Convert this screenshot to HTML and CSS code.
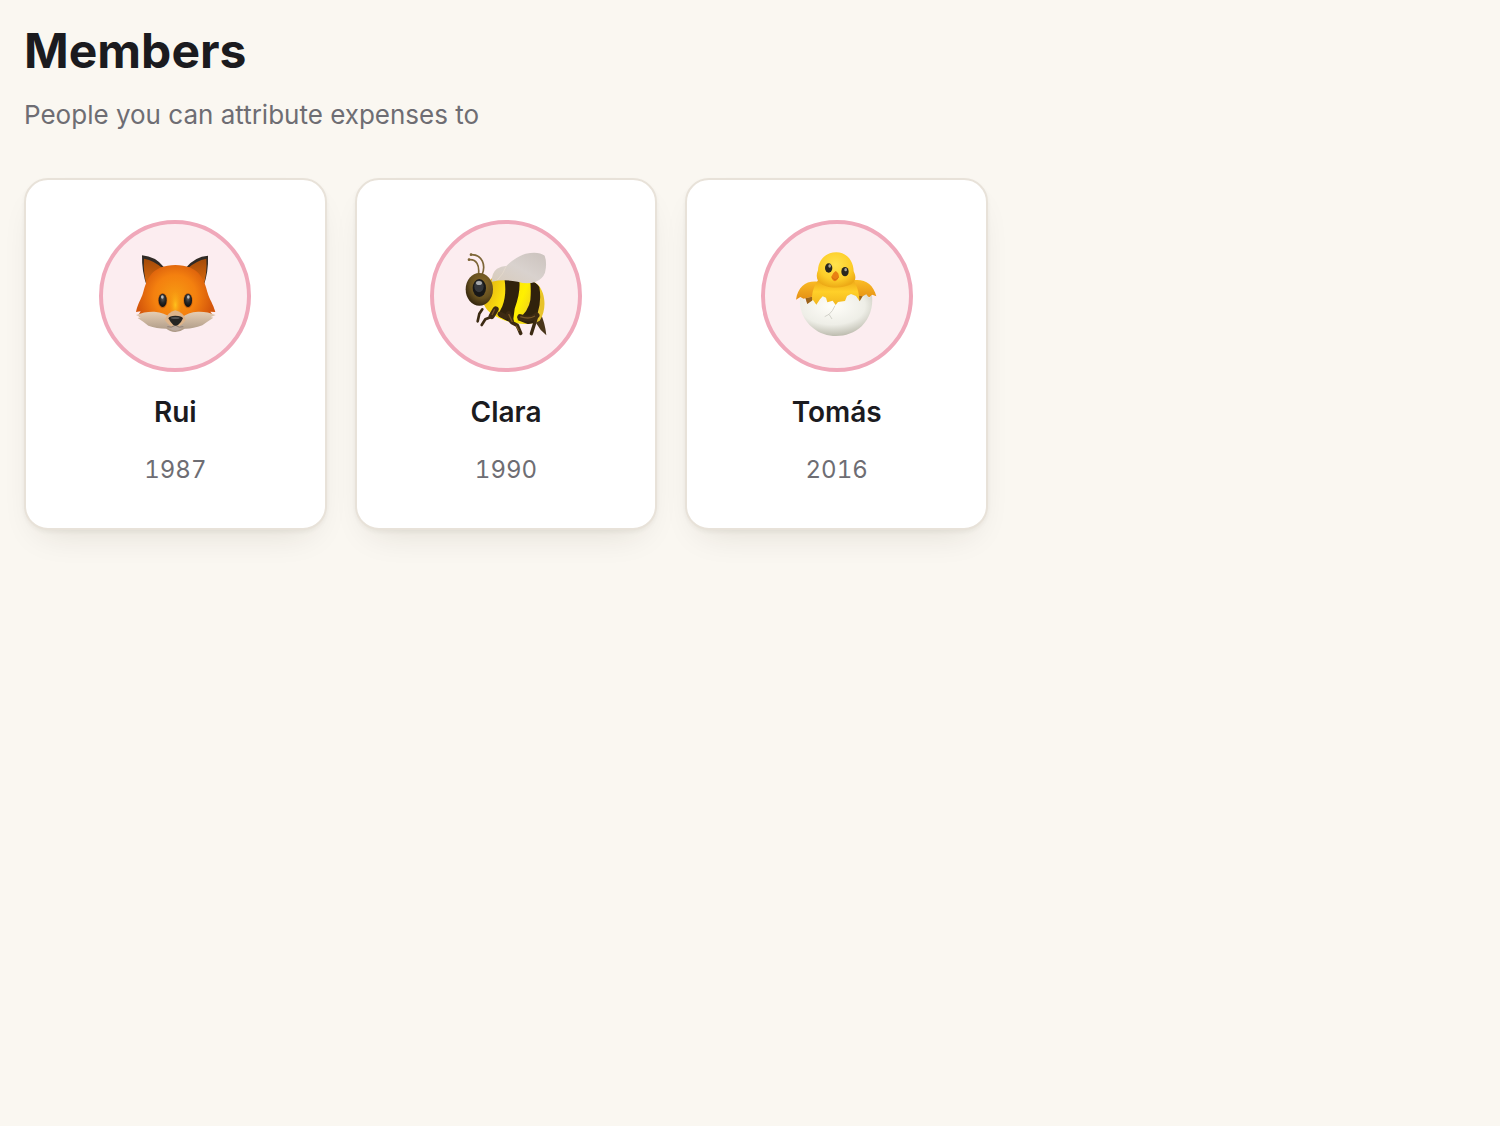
FILE: index.html
```html
<!DOCTYPE html>
<html lang="en">
<head>
<meta charset="utf-8">
<meta name="viewport" content="width=device-width, initial-scale=1">
<title>Members</title>
<link rel="stylesheet" href="styles.css">
</head>
<body>
<main class="page">
  <header class="page-header">
    <h1 class="title">Members</h1>
    <p class="subtitle">People you can attribute expenses to</p>
  </header>
  <ul class="members">
    <li class="card">
      <div class="avatar">
        <svg class="animal" viewBox="0 0 300 300" role="img" aria-label="Fox">
          <defs>
            <radialGradient id="fox-fur" gradientUnits="userSpaceOnUse" cx="150" cy="150" r="115">
              <stop offset="0" stop-color="#f79a12"/><stop offset=".55" stop-color="#f4800f"/><stop offset="1" stop-color="#d4560b"/>
            </radialGradient>
            <linearGradient id="fox-ear" x1="0" y1="0" x2="0" y2="1">
              <stop offset="0" stop-color="#a34a08"/><stop offset="1" stop-color="#e06d0e"/>
            </linearGradient>
            <linearGradient id="fox-cheek" x1="0" y1="0" x2="0" y2="1">
              <stop offset="0" stop-color="#e6ceb4"/><stop offset="1" stop-color="#a99683"/>
            </linearGradient>
            <radialGradient id="fox-nose-bridge">
              <stop offset="0" stop-color="#ffc21c"/><stop offset="1" stop-color="#f99b12" stop-opacity="0"/>
            </radialGradient>
            <radialGradient id="eye" cx=".5" cy=".35" r=".7">
              <stop offset="0" stop-color="#5c5c5c"/><stop offset=".45" stop-color="#292929"/><stop offset="1" stop-color="#080808"/>
            </radialGradient>
          </defs>
          <path d="M51 28Q92 31 117 64L66 122Q50 78 51 28ZM249 29Q210 32 184 64L235 122Q251 78 249 29Z" fill="#302a25"/>
          <path d="M57 38Q88 44 113 67L66 122Q54 78 57 38ZM244 38Q214 44 188 67L235 122Q247 80 244 38Z" fill="url(#fox-ear)"/>
          <path d="M151 57C119 57 90 67 75 90C62 109 59 124 54 141C48 161 38 173 33 198L47 196L39 209C67 224 104 229 151 229C198 229 237 223 264 208L256 197L271 198C265 174 253 160 248 141C243 124 240 109 227 90C212 67 183 57 151 57Z" fill="url(#fox-fur)"/>
          <path d="M33 207Q59 196 88 197Q121 200 133 214L151 208L171 214Q188 199 219 197Q247 196 272 207L257 213L265 215Q245 228 232 238Q202 249 179 248Q165 258 151 258Q134 257 124 248Q94 248 70 239Q55 227 38 216L47 214Z" fill="url(#fox-cheek)"/>
          <ellipse cx="151" cy="177" rx="19" ry="44" fill="url(#fox-nose-bridge)"/>
          <path d="M119 221Q129 198 151 193Q174 198 183 221Q168 243 151 244Q132 242 119 221Z" fill="#ddb389"/>
          <path d="M123 237Q139 243 151 238Q165 243 179 237Q169 253 151 254Q133 253 123 237Z" fill="#bbaaa0"/>
          <path d="M127 242Q139 247 151 238Q163 247 175 242" fill="none" stroke="#8f7c6d" stroke-width="3"/>
          <path d="M130 217Q133 209 151 209Q171 209 174 217Q169 230 159 237Q152 241 145 237Q135 227 130 217Z" fill="#252423"/>
          <ellipse cx="151" cy="216" rx="13" ry="3" fill="#555"/>
          <ellipse cx="113" cy="164" rx="14" ry="23" fill="#a7490c" opacity=".55"/>
          <ellipse cx="189" cy="164" rx="14" ry="23" fill="#a7490c" opacity=".55"/>
          <ellipse cx="113" cy="163" rx="12" ry="20" fill="url(#eye)"/>
          <ellipse cx="189" cy="163" rx="12" ry="20" fill="url(#eye)"/>
          <ellipse cx="112" cy="153" rx="4" ry="5" fill="#bdbdbd"/><ellipse cx="190" cy="153" rx="4" ry="5" fill="#bdbdbd"/>
        </svg>
      </div>
      <h2 class="name">Rui</h2>
      <p class="year">1987</p>
    </li>
    <li class="card">
      <div class="avatar">
        <svg class="animal" viewBox="0 0 300 300" role="img" aria-label="Bee">
          <defs>
            <linearGradient id="bee-wing" x1="0" y1="1" x2="1" y2="0">
              <stop offset="0" stop-color="#d8cbbb"/><stop offset=".5" stop-color="#d9d2ce"/><stop offset="1" stop-color="#cbc2bd"/>
            </linearGradient>
            <linearGradient id="bee-body" x1="0" y1="0" x2="1" y2=".3">
              <stop offset="0" stop-color="#dda716"/><stop offset=".4" stop-color="#fbdf0c"/><stop offset=".7" stop-color="#fff000"/><stop offset="1" stop-color="#e8c32a"/>
            </linearGradient>
            <radialGradient id="bee-head" cx=".6" cy=".35" r=".65">
              <stop offset="0" stop-color="#8c6b2a"/><stop offset=".65" stop-color="#66501f"/><stop offset="1" stop-color="#38290f"/>
            </radialGradient>
            <clipPath id="bee-shape"><path d="M105 98C145 89 222 94 246 116C270 142 272 194 251 224C222 241 165 236 123 213C94 200 76 176 84 151Z"/></clipPath>
          </defs>
          <path d="M251 196Q267 229 271 268Q252 253 240 231Z" fill="#49351a"/>
          <path d="M105 98C145 89 222 94 246 116C270 142 272 194 251 224C222 241 165 236 123 213C94 200 76 176 84 151Z" fill="url(#bee-body)"/>
          <g clip-path="url(#bee-shape)" fill="#30220c">
            <path d="M145 95Q166 98 190 104Q194 139 176 188L170 234L130 212Q128 198 139 181Q153 146 145 95Z"/>
            <path d="M222 98Q241 108 250 123Q257 164 245 201L235 242L184 222Q218 196 223 162Q226 130 222 98Z"/>
          </g>
          <path d="M107 107Q107 80 123 68Q138 59 151 60Q175 35 209 23Q248 15 266 29Q274 51 267 80Q260 99 238 108Q213 116 185 107Q145 99 107 107Z" fill="url(#bee-wing)"/>
          <path d="M124 102Q141 86 151 60" fill="none" stroke="#eee2d2" stroke-width="3" opacity=".5"/>
          <path d="M67 88C72 57 61 39 39 41M78 87C90 59 80 25 45 26" fill="none" stroke="#7d6537" stroke-width="5" stroke-linecap="round"/>
          <circle cx="45" cy="26" r="4" fill="#7d6537"/><circle cx="39" cy="41" r="4" fill="#7d6537"/>
          <ellipse cx="70" cy="130" rx="41" ry="49" fill="url(#bee-head)"/>
          <ellipse cx="70" cy="126" rx="20" ry="27" fill="#171717"/>
          <ellipse cx="69" cy="121" rx="14" ry="18" fill="#34363a"/>
          <ellipse cx="69" cy="111" rx="9" ry="6" fill="#a7a9ac"/>
          <g fill="none" stroke="#3c2a12" stroke-linecap="round" stroke-linejoin="round">
            <path d="M79 190L70 203L65 226M107 212L88 220L77 237" stroke-width="8"/>
            <path d="M119 190L107 210" stroke-width="18"/>
            <path d="M133 208L150 213L158 203L168 230L184 238L194 262" stroke-width="11"/>
            <path d="M132 204L148 212M158 203L166 225" stroke-width="15"/>
            <path d="M192 213Q223 225 242 208" stroke-width="17"/>
            <path d="M243 208L234 238L226 263" stroke-width="10"/>
          </g>
          <path d="M116 190L108 207M158 204L169 228M193 212Q220 221 237 210M180 239L189 255" fill="none" stroke="#765526" stroke-width="4"/>
        </svg>
      </div>
      <h2 class="name">Clara</h2>
      <p class="year">1990</p>
    </li>
    <li class="card">
      <div class="avatar">
        <svg class="animal" viewBox="0 0 300 300" role="img" aria-label="Hatching chick">
          <defs>
            <radialGradient id="chick-head" cx=".48" cy=".35" r=".65">
              <stop offset="0" stop-color="#ffe34d"/><stop offset=".65" stop-color="#fdce29"/><stop offset="1" stop-color="#edaa16"/>
            </radialGradient>
            <linearGradient id="chick-body" x1="0" y1="0" x2="0" y2="1">
              <stop offset="0" stop-color="#eda616"/><stop offset=".45" stop-color="#ffd029"/><stop offset="1" stop-color="#f1b41d"/>
            </linearGradient>
            <linearGradient id="chick-wing" x1="0" y1="0" x2="0" y2="1">
              <stop offset="0" stop-color="#fbbd25"/><stop offset="1" stop-color="#e58f14"/>
            </linearGradient>
            <radialGradient id="shell" cx=".45" cy=".28" r=".75">
              <stop offset="0" stop-color="#fffef9"/><stop offset=".6" stop-color="#eeeee7"/><stop offset="1" stop-color="#b7b6a8"/>
            </radialGradient>
          </defs>
          <path d="M55 155Q139 141 241 149L236 181H62Z" fill="#9b6419"/>
          <path d="M92 107C59 103 33 120 27 161L40 153L49 158L82 151ZM199 103C232 98 259 114 268 151L256 146L249 153L213 149Z" fill="url(#chick-wing)"/>
          <path d="M94 101C74 127 72 157 78 181H217C219 149 213 124 199 101Z" fill="url(#chick-body)"/>
          <path d="M149 19C116 18 94 42 93 73C85 90 90 108 106 116C130 128 171 127 193 115C211 102 205 88 200 76C199 43 179 20 149 19Z" fill="url(#chick-head)"/>
          <path d="M39 155L53 161L61 174L78 162L88 176L99 160L107 151L117 155L121 169L137 164L146 177L153 168L174 165L180 150L192 144L207 150L218 166L227 151L238 145L246 155L255 147C259 185 248 216 224 241C185 278 118 280 79 247C49 222 36 191 39 155Z" fill="url(#shell)"/>
          <path d="M144 179L136 194L126 205L135 219M126 205L113 212" fill="none" stroke="#bfc0b6" stroke-width="2"/>
          <ellipse cx="125" cy="66" rx="11" ry="14" fill="#29261e"/><ellipse cx="174" cy="77" rx="11" ry="14" fill="#29261e"/>
          <ellipse cx="128" cy="60" rx="4" ry="5" fill="#aaa596"/><ellipse cx="176" cy="71" rx="4" ry="5" fill="#aaa596"/>
          <path d="M146 75Q155 80 156 92Q151 104 144 106Q135 103 133 92Q136 81 146 75Z" fill="#e98013"/>
          <path d="M134 94Q140 99 144 101Q151 99 155 94" fill="none" stroke="#c9610f" stroke-width="2"/>
        </svg>
      </div>
      <h2 class="name">Tomás</h2>
      <p class="year">2016</p>
    </li>
  </ul>
</main>
</body>
</html>
```
FILE: styles.css
```css
* {
  box-sizing: border-box;
}

body {
  margin: 0;
  background: #faf7f1;
  color: #1b1b1f;
  font-family: Inter, "Liberation Sans", sans-serif;
}

h1, h2, p, ul {
  margin: 0;
  padding: 0;
}

.page {
  max-width: 1012px;
  padding: 20px 24px 48px;
}

.page-header {
  display: flex;
  flex-direction: column;
  gap: 14px;
  margin-bottom: 44px;
}

.title {
  font-size: 48px;
  line-height: 62px;
  font-weight: 700;
}

.subtitle {
  color: #6e6d73;
  font-size: 26px;
  line-height: 38px;
}

.members {
  display: grid;
  grid-template-columns: repeat(auto-fit, minmax(240px, 1fr));
  gap: 28px;
  list-style: none;
}

.card {
  display: flex;
  flex-direction: column;
  align-items: center;
  padding: 40px 24px;
  background: #fff;
  border: 2px solid #e8e2d9;
  border-radius: 24px;
  box-shadow: 0 2px 4px rgba(40, 35, 15, 0.05), 0 16px 36px -16px rgba(40, 35, 15, 0.14);
}

.avatar {
  display: grid;
  place-items: center;
  width: 152px;
  height: 152px;
  margin-bottom: 20px;
  background: #fcedf0;
  border: 4px solid #f0a8ba;
  border-radius: 50%;
}

.animal {
  width: 100px;
  height: 100px;
}

.name {
  margin-bottom: 20px;
  font-size: 28px;
  line-height: 40px;
  font-weight: 600;
}

.year {
  color: #6e6d73;
  font-size: 24px;
  line-height: 36px;
  font-variant-numeric: tabular-nums;
}
```
